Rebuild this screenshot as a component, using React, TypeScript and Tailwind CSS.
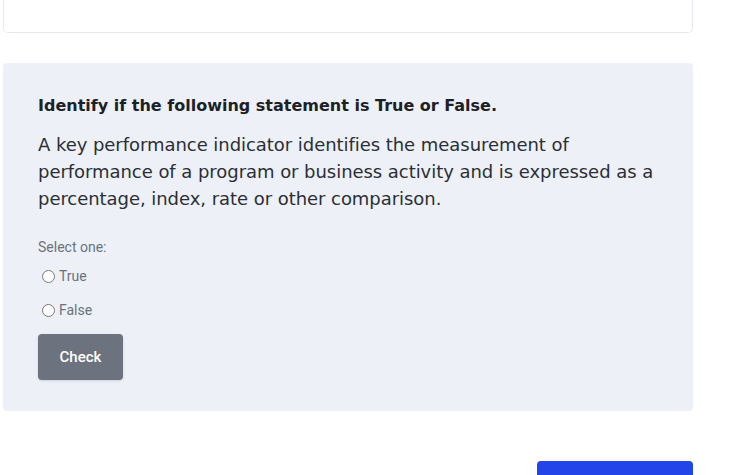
export default function App() {
  return (
    <div className="w-[730px] h-[475px] overflow-hidden bg-white">
      <div className="w-[690px] ml-[3px]">
        {/* previous card (scrolled off) */}
        <div className="h-[33px] bg-white border border-t-0 border-[#e6e9f1] rounded-b-[5px]" />

        {/* question */}
        <div className="mt-[30px] bg-[#edf0f7] rounded-[4px] pl-[35px] pr-[24px] pt-[30px] pb-[31px]">
          <h3
            className="text-[16px] font-bold text-[#1d2125] leading-[26px]"
            style={{ fontFamily: "'DejaVu Sans', sans-serif" }}
          >
            Identify if the following statement is True or False.
          </h3>
          <p
            className="mt-[12px] text-[18px] leading-[27px] tracking-[-0.05px] text-[#2b2f35]"
            style={{ fontFamily: "'DejaVu Sans', sans-serif" }}
          >
            A key performance indicator identifies the measurement of performance of a program or business activity and
            is expressed as a percentage, index, rate or other comparison.
          </p>

          <div className="mt-[25px] text-[14px] text-[#6a737b]" style={{ fontFamily: "Roboto, sans-serif" }}>
            <div className="leading-[20px]">Select one:</div>
            <label className="flex items-center gap-[4px] mt-[9px] ml-[4px] leading-[20px]">
              <input type="radio" name="ans" className="w-[13px] h-[13px] m-0" />
              <span>True</span>
            </label>
            <label className="flex items-center gap-[4px] mt-[14px] ml-[4px] leading-[20px]">
              <input type="radio" name="ans" className="w-[13px] h-[13px] m-0" />
              <span>False</span>
            </label>
            <button className="mt-[14px] w-[85px] h-[46px] rounded-[4px] bg-[#6c737e] text-white text-[15px] font-medium shadow-sm">
              Check
            </button>
          </div>
        </div>

        <div className="flex justify-end mt-[50px]">
          <div className="w-[156px] h-[40px] bg-[#2344e8] rounded-[4px]" />
        </div>
      </div>
    </div>
  );
}
